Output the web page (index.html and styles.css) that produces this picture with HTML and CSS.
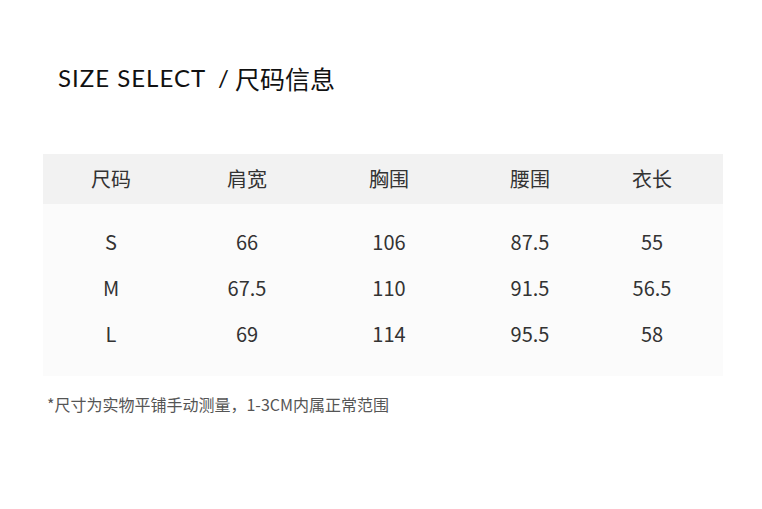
FILE: index.html
```html
<!DOCTYPE html>
<html lang="zh">
<head>
<meta charset="utf-8">
<link rel="stylesheet" href="styles.css">
</head>
<body>
<div class="page">
  <h1 class="title"><span class="en">SIZE SELECT</span><span class="slash">/</span><span class="cn">尺码信息</span></h1>
  <div class="table">
    <div class="row head">
      <div>尺码</div><div>肩宽</div><div>胸围</div><div>腰围</div><div>衣长</div>
    </div>
    <div class="body">
      <div class="row"><div>S</div><div>66</div><div>106</div><div>87.5</div><div>55</div></div>
      <div class="row"><div>M</div><div>67.5</div><div>110</div><div>91.5</div><div>56.5</div></div>
      <div class="row"><div>L</div><div>69</div><div>114</div><div>95.5</div><div>58</div></div>
    </div>
  </div>
  <p class="note">*尺寸为实物平铺手动测量，1-3CM内属正常范围</p>
</div>
</body>
</html>
```
FILE: styles.css
```css
html, body { margin: 0; padding: 0; background: #fff; }
body { font-family: "Noto Sans CJK SC", "Noto Sans", sans-serif; color: #333; }
.page { width: 762px; height: 509px; padding: 0 0 0 43px; box-sizing: border-box; }
.title {
  margin: 0; padding-top: 60px; height: 96px; box-sizing: border-box;
  font-weight: 400; font-size: 25px; line-height: 36px; color: #111;
  display: flex; align-items: center; padding-left: 15px;
}
.title .en { font-family: "Lato", sans-serif; letter-spacing: 1px; font-size: 24px; }
.title .slash { margin: 0 6px 0 12px; font-family: "Lato", sans-serif; font-size: 24px; }
.title .cn { font-size: 25px; }
.table { width: 680px; margin-top: 58px; }
.row {
  display: grid;
  grid-template-columns: 136px 136px 148px 134px 110px;
  text-align: center; font-size: 20px;
}
.head { height: 50px; background: #f2f2f2; align-items: center; line-height: 50px; }
.body { background: #fbfbfb; padding: 17px 0 17px; }
.body .row { height: 46px; line-height: 42px; }
.note { margin: 17px 0 0 4px; font-size: 16px; color: #555; line-height: 22px; }
```
